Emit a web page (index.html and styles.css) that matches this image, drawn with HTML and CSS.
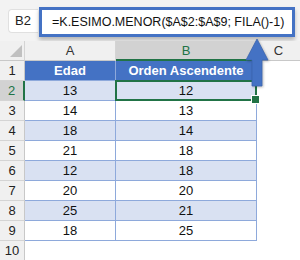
FILE: index.html
```html
<!DOCTYPE html>
<html lang="es">

<head>
    <meta charset="UTF-8">
    <meta name="viewport" content="width=device-width, initial-scale=1.0">
    <title>K.ESIMO.MENOR ascendente</title>
    <link rel="stylesheet" href="styles.css">
</head>

<body>
    <div class="app">
        <div class="bar">
            <div class="namebox">B2</div>
            <div class="formula">=K.ESIMO.MENOR($A$2:$A$9; FILA()-1)</div>
        </div>

        <div class="sheet">
            <div class="corner"></div>
            <div class="colhead">A</div>
            <div class="colhead active">B</div>
            <div class="colhead last">C</div>

            <div class="rh">1</div>
            <div class="c th">Edad</div>
            <div class="c th">Orden Ascendente</div>
            <div class="blank"></div>

            <div class="rh active">2</div>
            <div class="c band">13</div>
            <div class="c band sel">12</div>
            <div class="blank"></div>

            <div class="rh">3</div>
            <div class="c">14</div>
            <div class="c">13</div>
            <div class="blank"></div>

            <div class="rh">4</div>
            <div class="c band">18</div>
            <div class="c band">14</div>
            <div class="blank"></div>

            <div class="rh">5</div>
            <div class="c">21</div>
            <div class="c">18</div>
            <div class="blank"></div>

            <div class="rh">6</div>
            <div class="c band">12</div>
            <div class="c band">18</div>
            <div class="blank"></div>

            <div class="rh">7</div>
            <div class="c">20</div>
            <div class="c">20</div>
            <div class="blank"></div>

            <div class="rh">8</div>
            <div class="c band">25</div>
            <div class="c band">21</div>
            <div class="blank"></div>

            <div class="rh">9</div>
            <div class="c">18</div>
            <div class="c">25</div>
            <div class="blank"></div>

            <div class="rh">10</div>
            <div class="blank"></div>
            <div class="blank"></div>
            <div class="blank"></div>
        </div>

        <!-- arrow from the selected cell up to the formula -->
        <svg class="arrow" width="26" height="52" viewBox="0 0 26 52">
            <path d="M13 2 L24 23 L18 23 L18 49 L8 49 L8 23 L2 23 Z" fill="#4472c4" stroke="#3a64b0" stroke-width="0.8" />
        </svg>
    </div>
</body>

</html>
```

FILE: styles.css
```css
* {
    padding: 0;
    margin: 0;
    box-sizing: border-box;
}

body {
    width: 300px;
    height: 260px;
    overflow: hidden;
    background-color: #fff;
    font-family: 'Liberation Sans', Arial, sans-serif;
    color: #222;
}

.app {
    position: relative;
    width: 300px;
    height: 260px;
}

/* formula bar */
.bar {
    display: flex;
    align-items: flex-start;
    height: 41px;
    padding: 7px 0 0 8px;
    background-color: #f3f3f3;
}

.namebox {
    width: 30px;
    height: 24px;
    margin-top: 2px;
    padding-left: 6px;
    line-height: 22px;
    font-size: 13px;
    color: #222;
    background-color: #fff;
    border: 1px solid #e0e0e0;
    border-right: none;
    border-radius: 4px 0 0 4px;
}

.formula {
    width: 256px;
    height: 30px;
    margin-left: 1px;
    padding-left: 10px;
    line-height: 24px;
    font-size: 12.5px;
    color: #111;
    white-space: nowrap;
    background-color: #fff;
    border: 3px solid #4472c4;
    box-shadow: 0 3px 4px rgba(0, 0, 0, 0.25);
}

/* grid */
.sheet {
    display: grid;
    grid-template-columns: 25px 91px 141px 1fr;
    grid-auto-rows: 20px;
}

.corner,
.colhead {
    background-color: #f0f0f0;
    border-right: 1px solid #d4d4d4;
    border-bottom: 1px solid #c8c8c8;
}

.corner {
    position: relative;
}

.corner::after {
    content: "";
    position: absolute;
    right: 2px;
    bottom: 3px;
    border-style: solid;
    border-width: 0 0 12px 12px;
    border-color: transparent transparent #c0c0c0 transparent;
}

.colhead {
    text-align: center;
    font-size: 13px;
    line-height: 19px;
    color: #333;
}

.colhead.last {
    border-right: none;
}

.colhead.active {
    background-color: #d2d2d2;
    color: #217346;
    border-bottom: 2px solid #217346;
}

.rh {
    background-color: #f0f0f0;
    border-right: 1px solid #c8c8c8;
    border-bottom: 1px solid #d4d4d4;
    text-align: center;
    font-size: 13px;
    line-height: 19px;
    color: #222;
}

.rh.active {
    background-color: #d2d2d2;
    color: #217346;
    border-right: 2px solid #217346;
}

.c {
    border-right: 1px solid #8ea9db;
    border-bottom: 1px solid #8ea9db;
    text-align: center;
    font-size: 13px;
    line-height: 19px;
    color: #111;
}

.th {
    background-color: #4472c4;
    color: #fff;
    font-weight: bold;
    white-space: nowrap;
}

.band {
    background-color: #d9e1f2;
}

.blank {
    background-color: #fff;
}

/* active cell */
.sel {
    position: relative;
}

.sel::after {
    content: "";
    position: absolute;
    left: -1px;
    top: -1px;
    right: -1px;
    bottom: -1px;
    border: 2px solid #217346;
}

.sel::before {
    content: "";
    position: absolute;
    right: -4px;
    bottom: -4px;
    width: 7px;
    height: 7px;
    background-color: #217346;
    border: 1px solid #fff;
    z-index: 1;
}

.arrow {
    position: absolute;
    left: 244px;
    top: 37px;
    filter: drop-shadow(1px 1px 1px rgba(0, 0, 0, 0.25));
}
```
